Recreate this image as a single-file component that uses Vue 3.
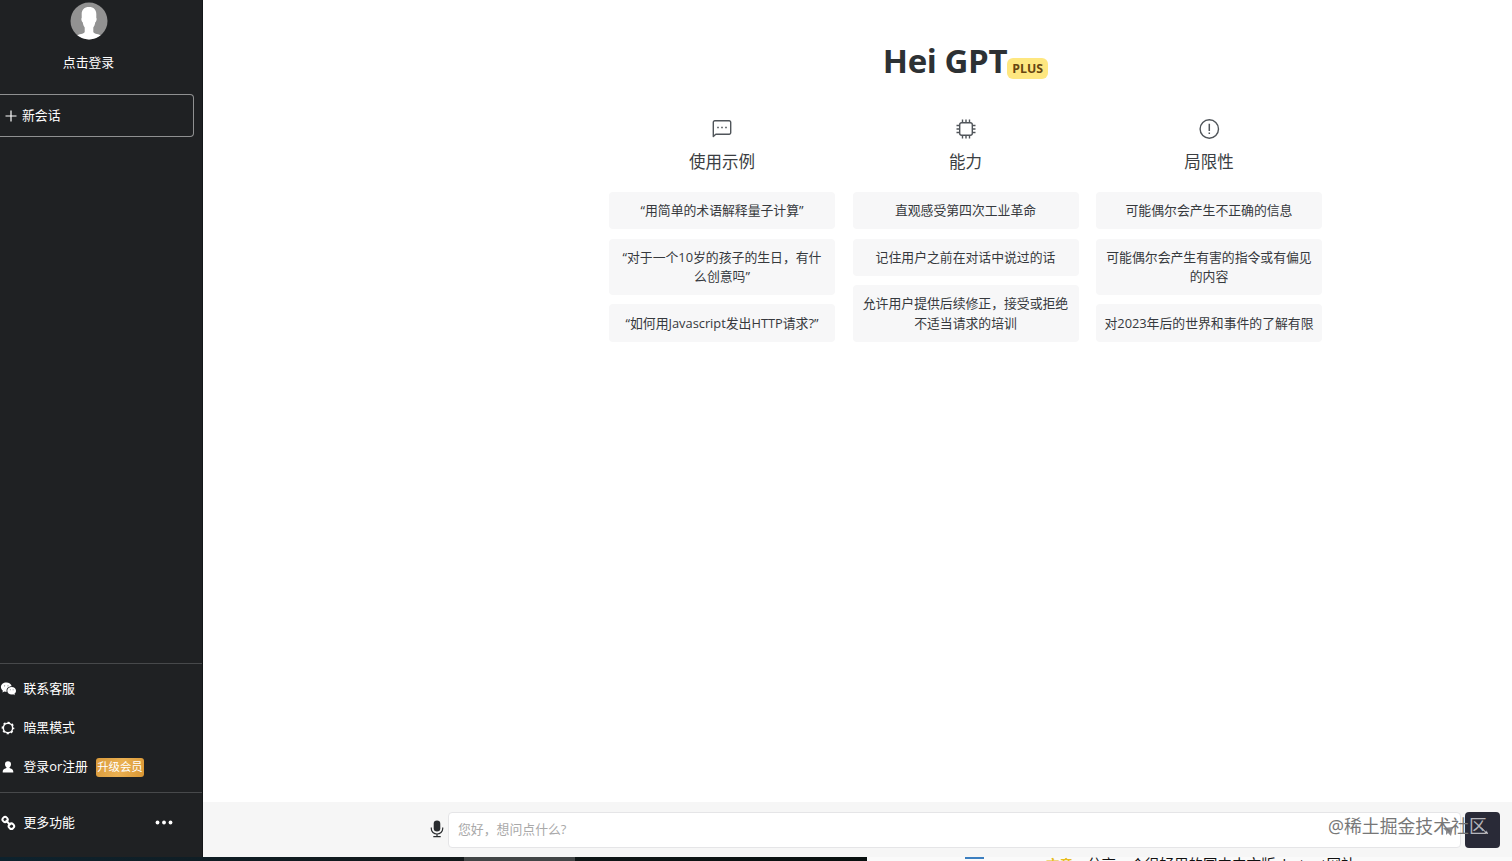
<script setup>
const columns = [
  { icon: 'chat', title: '使用示例', items: ['“用简单的术语解释量子计算”', '“对于一个10岁的孩子的生日，有什么创意吗”', '“如何用Javascript发出HTTP请求?”'] },
  { icon: 'chip', title: '能力', items: ['直观感受第四次工业革命', '记住用户之前在对话中说过的话', '允许用户提供后续修正，接受或拒绝不适当请求的培训'] },
  { icon: 'warn', title: '局限性', items: ['可能偶尔会产生不正确的信息', '可能偶尔会产生有害的指令或有偏见的内容', '对2023年后的世界和事件的了解有限'] },
]
</script>

<template>
  <div class="screen">
    <div class="window">
      <aside class="sidebar">
        <div class="profile">
          <svg class="avatar" viewBox="0 0 38 38">
            <defs><clipPath id="face"><circle cx="19" cy="19" r="18.5" /></clipPath></defs>
            <circle cx="19" cy="19" r="18.5" fill="#929292" />
            <g clip-path="url(#face)" fill="#fff">
              <path d="M19 5C14 5 11.400 8 11.700 13v3c-.7.2-.3 3.600 1 4.200.4 2.800 1.200 4 2 5.300V30c-1 2.200-5.600 1.800-8.700 4v5h26v-5C28.900 31.800 24.300 32.200 23.300 30v-4.500c.8-1.300 1.600-2.500 2-5.300 1.300-.6 1.700-4 1-4.200v-3C26.600 8 24 5 19 5z" />
            </g>
          </svg>
          <span>点击登录</span>
        </div>
        <div class="new-chat">
          <svg width="12" height="12" viewBox="0 0 12 12" stroke="#fff" stroke-width="1.200"><path d="M6 .5v11M.5 6h11" /></svg>
          <span>新会话</span>
        </div>
        <nav class="links">
          <div class="link">
            <svg width="16" height="14" viewBox="0 0 16 14">
              <path fill="#fff" d="M6.400.500C3.200.500.900 2.600.900 5.100c0 1.500.8 2.800 2 3.600l-.5 1.800 2-1c.6.2 1.300.2 2 .2h.3C5.900 6.500 8.400 4.200 11.700 4.200 11.200 2 9 .5 6.400.500z" />
              <path fill="#fff" d="M11.700 4.900c-2.500 0-4.400 1.700-4.400 3.800s1.900 3.800 4.400 3.800c.5 0 1-.1 1.500-.2l1.600.9-.4-1.500c1-.7 1.600-1.800 1.600-3 0-2.100-1.900-3.800-4.300-3.800z" />
              <g fill="#77797a"><circle cx="4.600" cy="3.800" r=".6" /><circle cx="8" cy="3.800" r=".6" /><circle cx="10.300" cy="7.700" r=".5" /><circle cx="13.100" cy="7.700" r=".5" /></g>
            </svg>
            <span>联系客服</span>
          </div>
          <div class="link">
            <svg width="16" height="14" viewBox="0 0 16 14">
              <circle cx="8" cy="7" r="5.600" fill="none" stroke="#fff" stroke-width="1.500" stroke-dasharray="2.200 2.198" stroke-dashoffset="1.100" />
              <circle cx="8" cy="7" r="4.700" fill="none" stroke="#fff" stroke-width="1.500" />
            </svg>
            <span>暗黑模式</span>
          </div>
          <div class="link">
            <svg width="16" height="14" viewBox="0 0 16 14"><path fill="#fff" d="M8 1.200a3 3 0 0 0-3 3c0 1.500.8 2.600 1.700 3.300-.2 1-4 1-4 4.200v.8h10.600v-.8c0-3.200-3.800-3.200-4-4.200C10.200 6.800 11 5.700 11 4.200a3 3 0 0 0-3-3z" /></svg>
            <span>登录or注册</span>
            <span class="vip">升级会员</span>
          </div>
        </nav>
        <div class="more">
          <svg width="16" height="16" viewBox="0 0 16 16" fill="none" stroke="#fff" stroke-width="2">
            <rect x="2.600" y="2" width="5" height="5" rx="2.300" transform="rotate(45 5.100 4.500)" /><rect x="8.800" y="8.600" width="5.200" height="5.200" rx="2.400" transform="rotate(45 11.400 11.200)" /><path d="M5.800 5.200l4.700 5" />
          </svg>
          <span>更多功能</span>
          <svg class="dots" width="18" height="5" viewBox="0 0 18 5" fill="#fff"><circle cx="2.500" cy="2.500" r="1.900" /><circle cx="9" cy="2.500" r="1.900" /><circle cx="15.500" cy="2.500" r="1.900" /></svg>
        </div>
      </aside>

      <main class="main">
        <section class="intro">
          <h1><span class="brand">Hei GPT</span><span class="plus">PLUS</span></h1>
          <div class="columns">
            <div v-for="c in columns" :key="c.title" class="column">
              <svg class="icon" viewBox="0 0 22 22" fill="none" stroke="#50555a" stroke-width="1.400">
                <g v-if="c.icon === 'chat'">
                  <path d="M2.300 18.500V4.300a1.500 1.500 0 0 1 1.500-1.500h14.400a1.500 1.500 0 0 1 1.500 1.500v10.400a1.500 1.500 0 0 1-1.500 1.500H4.800z" stroke-linejoin="round" />
                  <path d="M6.200 9.500h1.600M10.200 9.500h1.600M14.200 9.500h1.600" stroke-width="1.700" />
                </g>
                <g v-else-if="c.icon === 'chip'">
                  <rect x="4.700" y="4.700" width="12.600" height="12.600" rx="2" />
                  <path d="M7.500 4.500V1.500M11 4.500V1.500M14.500 4.500V1.500M7.500 20.500v-3M11 20.500v-3M14.500 20.500v-3M4.500 7.500h-3M4.500 11h-3M4.500 14.500h-3M20.500 7.500h-3M20.500 11h-3M20.500 14.500h-3" />
                </g>
                <g v-else>
                  <circle cx="11.300" cy="11" r="9.200" />
                  <path d="M11.300 5.800v7.200M11.300 14.500v1.600" stroke-width="1.500" />
                </g>
              </svg>
              <h2>{{ c.title }}</h2>
              <p v-for="item in c.items" :key="item">{{ item }}</p>
            </div>
          </div>
        </section>

        <footer class="composer">
          <svg class="mic" width="14" height="18" viewBox="0 0 14 18">
            <rect x="3.700" y=".5" width="6.600" height="11" rx="3.300" fill="#292c2f" />
            <path d="M1.300 7.500v1.300a5.700 5.200 0 0 0 11.400 0V7.500M7 14v2.500M3.300 16.700h7.400" fill="none" stroke="#292c2f" stroke-width="1.200" />
          </svg>
          <div class="field">您好，想问点什么?</div>
          <div class="send">
            <svg width="14" height="14" viewBox="0 0 14 14"><path d="M5.500 4.500l4.800 4.800.3-2 1.500 3.600-3.800-.8 1.200-.6L5 5z" fill="#d4d4da" /></svg>
          </div>
          <svg class="cursor" width="13" height="13" viewBox="0 0 13 13"><path d="M1 4l10-1-2 9-3-3-2 2v-4z" fill="#8b8b8f" /></svg>
          <div class="watermark">@稀土掘金技术社<span>区</span></div>
        </footer>
      </main>
    </div>

    <div class="behind">
      <div class="dark"><i></i></div>
      <div class="page">
        <b class="blue"></b>
        <span class="tag">文章</span>
        <span class="headline">分享一个很好用的国内中文版chatgpt网站</span>
      </div>
    </div>
  </div>
</template>

<style>
body { background: #fff; overflow: hidden; }
</style>

<style scoped>
* { box-sizing: border-box; }
.screen { width: 1512px; height: 861px; overflow: hidden; display: flex; flex-direction: column; font: 12.87px/19.500px "Open Sans", "Noto Sans CJK SC", sans-serif; color: #36393d; }
svg { display: block; flex: none; }
.window { display: flex; height: 857px; flex: none; }
.sidebar { width: 203px; background: #1f2123; color: #fff; display: flex; flex-direction: column; border-right: 1px solid #141719; }
.profile { width: 177px; display: flex; flex-direction: column; align-items: center; padding-top: 2px; }
.avatar { width: 38px; height: 38px; }
.profile span { margin-top: 13px; }
.new-chat { height: 43px; width: 194px; margin-top: 21.500px; border: 1px solid #8f9091; border-left: 0; border-radius: 0 4px 4px 0; display: flex; align-items: center; gap: 5px; padding-left: 5px; }
.links { margin-top: auto; height: 129px; border-top: 1px solid #47494b; padding-top: 5px; }
.link { display: flex; align-items: center; height: 39.300px; }
.link span, .more span { margin-left: 7.500px; white-space: nowrap; }
.link .vip { margin-left: 8px; width: 48px; height: 19px; border-radius: 3px; font-size: 11.400px; line-height: 18px; text-align: center; background: linear-gradient(110deg, #d99a3b, #eab052 50%, #d99633); }
.more { height: 65px; border-top: 1px solid #47494b; display: flex; align-items: center; padding-bottom: 4px; }
.more .dots { margin-left: auto; margin-right: 29px; position: relative; top: -1px; }
.main { flex: 1; display: flex; flex-direction: column; min-width: 0; }
.intro { margin-left: 406px; width: 713px; }
h1 { margin: 38px 0 0; height: 46px; display: flex; justify-content: center; align-items: flex-start; color: #2d3134; font-size: 33px; line-height: 46px; }
.brand { white-space: nowrap; letter-spacing: -.4px; }
.plus { margin-top: 20px; width: 41px; height: 21px; border-radius: 6px; background: #fee780; color: #674510; font-size: 12.300px; line-height: 21px; text-align: center; font-weight: 700; }
.columns { display: grid; grid-template-columns: repeat(3, 226px); justify-content: space-between; margin-top: 34px; }
.column { display: flex; flex-direction: column; align-items: center; text-align: center; }
.icon { width: 22px; height: 22px; }
h2 { margin: 9px 0 18px; font-size: 16.500px; font-weight: 400; line-height: 25px; color: #3b3e42; }
p { margin: 0 0 9.100px; width: 226px; padding: 9.100px 8px; background: #f7f7f8; border-radius: 4px; font-size: 12.87px; line-height: 19.300px; letter-spacing: -.02px; }
.composer { position: relative; margin-top: auto; height: 55px; background: #f6f6f6; display: flex; align-items: flex-start; padding: 10px 12px 0 227px; }
.mic { margin-top: 8px; }
.field { margin-left: 4px; width: 1013px; height: 36px; border: 1px solid #e5e5e7; border-radius: 4px; background: #fff; color: #a9a9a9; padding-left: 9px; line-height: 33px; }
.send { margin-left: 4px; width: 35px; height: 36px; border-radius: 4px; background: #292a37; padding: 11px; }
.cursor { position: absolute; left: 1239px; top: 22px; }
.watermark { position: absolute; left: 1125px; top: 11px; font-size: 17.850px; line-height: 26px; color: #777; white-space: nowrap; }
.watermark span { color: #b5b5bb; }
.behind { height: 4px; display: flex; overflow: hidden; flex: none; }
.dark { width: 867px; background: linear-gradient(90deg, #0d222d, #12191b 50%, #08100f); }
.dark i { display: block; margin-left: 464px; width: 111px; height: 4px; background: #414546; }
.page { flex: 1; background: #fafafa; display: flex; align-items: flex-start; height: 4px; overflow: hidden; }
.blue { width: 19px; height: 1.500px; margin-left: 98px; background: #3c7fc0; }
.tag { color: #e8bd20; font-size: 13.500px; font-weight: 700; line-height: 18px; margin: -1px 0 0 62px; }
.headline { color: #111; font-size: 14.500px; line-height: 18px; margin: -1px 0 0 14px; white-space: nowrap; }
</style>
